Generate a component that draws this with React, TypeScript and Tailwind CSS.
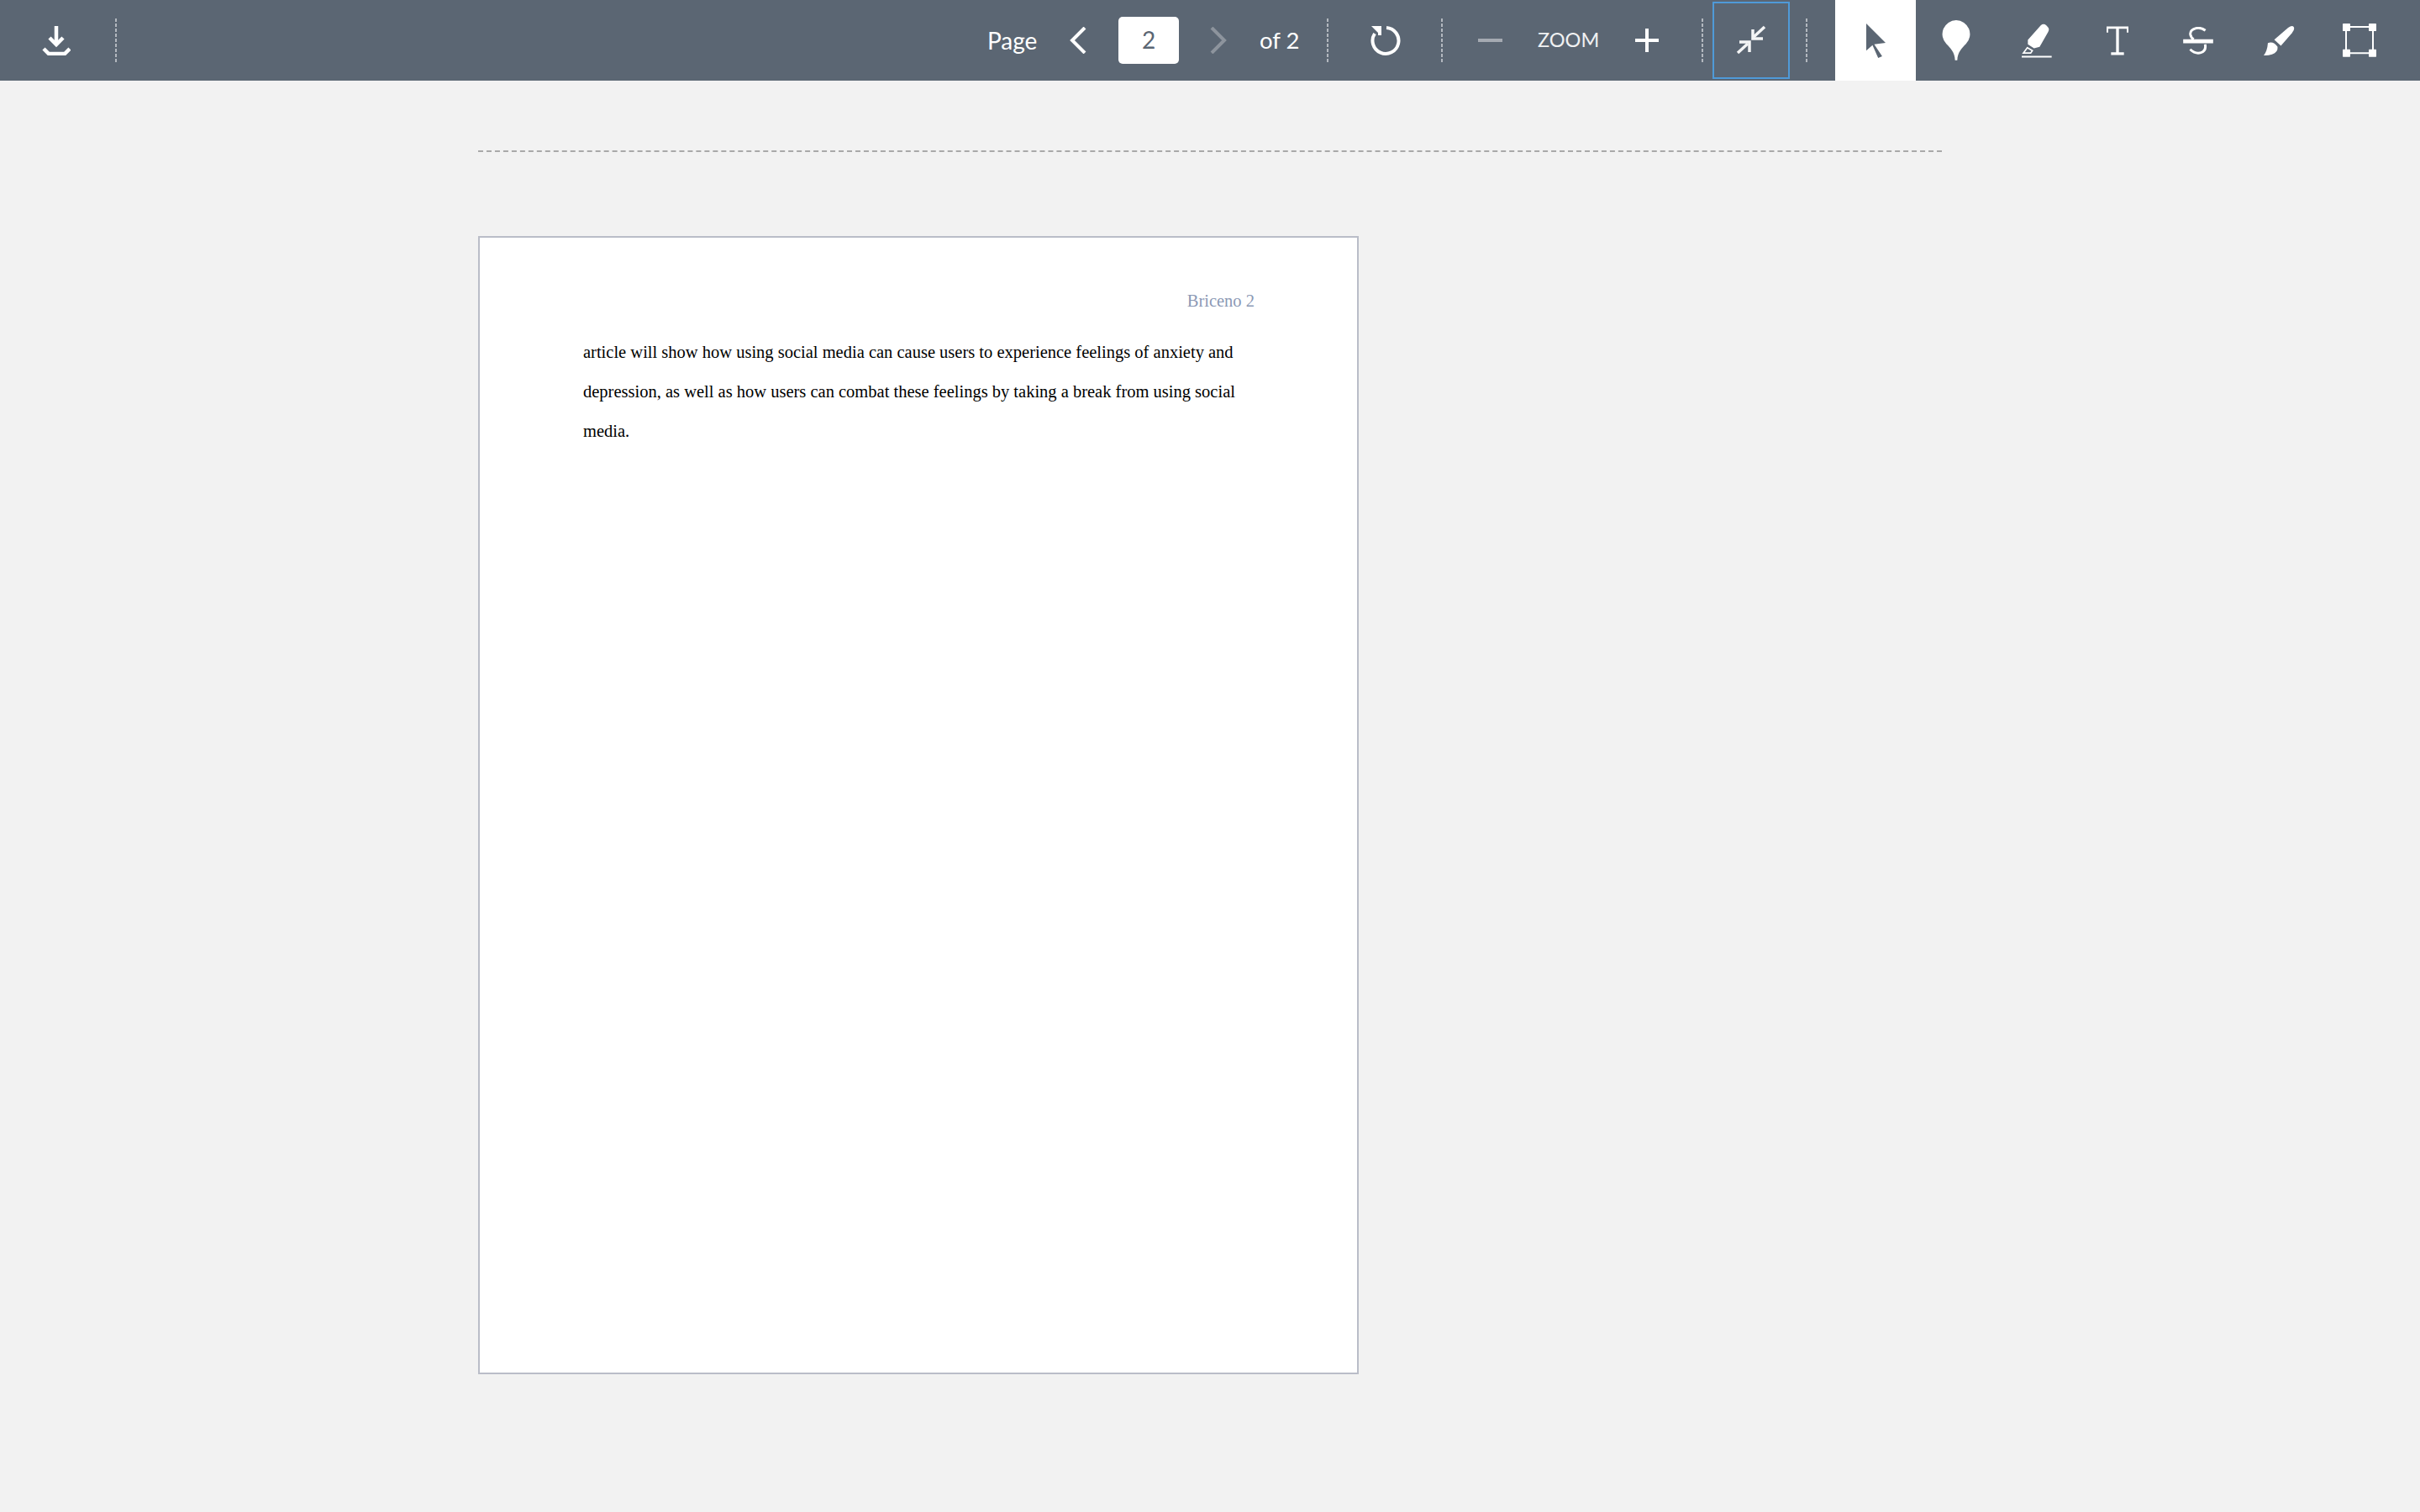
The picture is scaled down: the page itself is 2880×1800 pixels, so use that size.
import React from "react";

const Sep = ({ className = "" }: { className?: string }) => (
  <div className={"w-[2px] h-[52px] shrink-0 bg-[repeating-linear-gradient(to_bottom,#b3b8bf_0,#b3b8bf_4px,transparent_4px,transparent_6px)] " + className} />
);

const Tool = ({ children, active = false }: { children: React.ReactNode; active?: boolean }) => (
  <div className={"w-[96px] h-[96px] shrink-0 flex items-center justify-center " + (active ? "bg-white" : "")}>{children}</div>
);

export default function App() {
  return (
    <div className="w-[2880px] h-[1800px] overflow-hidden bg-[#f2f2f2] font-['Lato',sans-serif]">
      <header className="h-[96px] bg-[#5b6673] flex items-center text-white">
        <svg className="ml-[50px] shrink-0" width="34" height="35" viewBox="50 31 34 35" fill="none" stroke="#fff" strokeWidth="4.5">
          <path d="M67 31V53" />
          <path d="M59 45L67 53L75 45" />
          <path d="M52 58L58 64H77L83 58" />
        </svg>
        <Sep className="ml-[53px]" />

        <span className="ml-[1036px] w-[60px] text-[28px] leading-none">Page</span>
        <svg className="ml-[38px] shrink-0" width="20" height="32" viewBox="0 0 20 32" fill="none" stroke="#fff" strokeWidth="4">
          <path d="M18 1L3 16L18 31" />
        </svg>
        <div className="ml-[38px] w-[72px] h-[56px] pb-[2px] rounded-[5px] bg-white text-[#5b6673] text-[28px] flex items-center justify-center">2</div>
        <svg className="ml-[37px] shrink-0" width="20" height="32" viewBox="0 0 20 32" fill="none" stroke="#8d949d" strokeWidth="4">
          <path d="M2 1L17 16L2 31" />
        </svg>
        <span className="ml-[39px] w-[48px] text-[27.5px] leading-none whitespace-nowrap">of 2</span>
        <Sep className="ml-[32px]" />
        <svg className="ml-[50px] shrink-0" width="37" height="37" viewBox="0 0 37 37" fill="none">
          <path d="M19 3A15.5 15.5 0 1 1 5 10" stroke="#fff" strokeWidth="4" />
          <path d="M1 1H12V12Z" fill="#fff" />
          <path d="M9 1H13V12H9Z" fill="#fff" />
        </svg>
        <Sep className="ml-[47px]" />
        <div className="ml-[42px] w-[29px] h-[4px] bg-[#a5aab2] shrink-0" />
        <span className="ml-[42px] w-[74px] text-[23.5px] leading-none text-[#f0f1f2]">ZOOM</span>
        <svg className="ml-[42px] shrink-0" width="28" height="28" viewBox="0 0 28 28" fill="none" stroke="#fff" strokeWidth="4">
          <path d="M0 14H28M14 0V28" />
        </svg>
        <Sep className="ml-[51px]" />
        <div className="ml-[11px] w-[92px] h-[92px] border-2 border-[#4f9ad8] flex items-center justify-center shrink-0">
          <svg width="36" height="36" viewBox="2066 30 36 36" fill="none" stroke="#f4f5f6" strokeWidth="3.5">
            <path d="M2100 32L2087 44" />
            <path d="M2086 35V46H2098" />
            <path d="M2068 63L2080 52" />
            <path d="M2070 50H2082V62" />
          </svg>
        </div>
        <Sep className="ml-[19px]" />
        <div className="ml-[33px] flex">
          <Tool active>
            <svg width="23" height="41" viewBox="150 82 68 121" fill="#5b6673">
              <path d="M150 82L218 150L178 155L206 197L192 203L172 158L150 177Z" />
            </svg>
          </Tool>
          <Tool>
            <svg width="34" height="48" viewBox="422 72 100 144" fill="#fff">
              <path d="M472 72a50 50 0 0 1 35 85c-14 14-30 30-31 58h-8c-1-28-17-44-31-58a50 50 0 0 1 35-85z" />
            </svg>
          </Tool>
          <Tool>
            <svg width="36" height="41" viewBox="708 82 108 122" fill="#fff">
              <path d="M776 88Q786 80 796 88L802 95Q808 102 802 112L772 165L752 170L730 156L730 140Z" />
              <path d="M728 168L746 178L740 187H714Z" fill="none" stroke="#fff" strokeWidth="5" />
              <rect x="708" y="197" width="107" height="6" />
            </svg>
          </Tool>
          <Tool>
            <svg width="26" height="35" viewBox="50 92 78 104" fill="#fff">
              <path d="M50 93H128V115H122V101H94V185H112V195H66V185H84V101H56V115H50Z" />
            </svg>
          </Tool>
          <Tool>
            <svg width="36" height="33" viewBox="324 95 108 100" fill="none" stroke="#fff">
              <path d="M404 108Q388 96 370 100Q348 106 350 122Q352 134 362 140" strokeWidth="9" />
              <path d="M324 147H432" strokeWidth="14" />
              <path d="M403 158Q408 180 388 188Q368 194 349 176" strokeWidth="9" />
            </svg>
          </Tool>
          <Tool>
            <svg width="37" height="37" viewBox="610 88 112 112" fill="#fff">
              <path d="M698 97Q712 87 718 94Q723 103 712 116L672 162L648 140Z" />
              <path d="M625 152Q645 144 660 166Q662 186 640 193Q625 198 610 197Q623 180 625 152Z" />
            </svg>
          </Tool>
          <Tool>
            <svg width="40" height="40" viewBox="894 84 120 120" fill="#fff">
              <path d="M906 96H1002V190H906Z" fill="none" stroke="#fff" strokeWidth="6" />
              <rect x="894" y="84" width="27" height="27" rx="2" />
              <rect x="987" y="84" width="27" height="27" rx="2" />
              <rect x="894" y="176" width="27" height="27" rx="2" />
              <rect x="987" y="176" width="27" height="27" rx="2" />
            </svg>
          </Tool>
        </div>
      </header>

      <main className="mx-auto w-[1742px]">
        <div className="mt-[83px] border-t-2 border-dashed border-[#a9a9a9]" />
        <article className="mt-[100px] w-[1048px] h-[1355px] box-border border-2 border-[#babdc8] bg-white pl-[123px] pr-[121px] pt-[63px] font-['Liberation_Serif',serif] text-[20.5px] text-black">
          <p className="text-right text-[#8b99b5] leading-[24px] pr-[1px]">Briceno 2</p>
          <div className="mt-[26px] leading-[47px] whitespace-nowrap">
            <p>article will show how using social media can cause users to experience feelings of anxiety and</p>
            <p>depression, as well as how users can combat these feelings by taking a break from using social</p>
            <p>media.</p>
          </div>
        </article>
      </main>
    </div>
  );
}
